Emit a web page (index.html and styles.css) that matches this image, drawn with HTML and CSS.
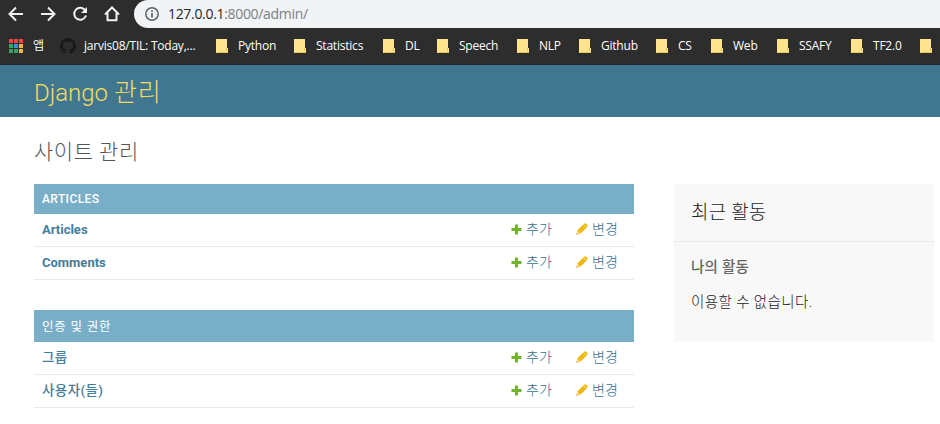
FILE: index.html
```
<!DOCTYPE html>
<html lang="ko">
<head>
<meta charset="utf-8">
<title>사이트 관리 | Django 사이트 관리</title>
<link rel="stylesheet" href="styles.css">
</head>
<body>
<svg class="defs" width="0" height="0" aria-hidden="true">
  <symbol id="folder" viewBox="0 0 12 14"><path fill="#ffe48d" d="M0 0h11v9h1v5H0z"/><path fill="#e7c55c" d="M10 9h1v3h-1zM1 13h11v1H1z"/></symbol>
  <symbol id="plus" viewBox="0 0 11 11"><path fill="#70b52c" d="M4 .5h3V4h3.500v3H7v3.500H4V7H.5V4H4z"/></symbol>
  <symbol id="pencil" viewBox="0 0 12 12"><path fill="#efb80b" d="M.5 11.500l.8-3.900L7.600 1.300l3.100 3.100-6.300 6.300z"/><path fill="#f8d88a" d="M1.300 7.600l3.100 3.100-3.900.8z"/><path fill="#efb80b" d="M8.200.8q1-1 2 0l1 1q1 1 0 2l-.5.6-3.100-3.100z"/><path fill="none" stroke="#fff3c5" stroke-width=".6" d="M7.300 1.700l3 3"/><path fill="#b88a28" d="M.5 11.500l.3-1.500 1.200 1.200z"/></symbol>
</svg>
<div class="toolbar">
  <svg class="nav" width="134" height="28" viewBox="0 0 134 28" fill="none" stroke="#f0f1f2" stroke-width="2">
    <path d="M23 14H10M16 7.500L9.500 14l6.500 6.500"/>
    <path d="M41 14h13M48 7.500l6.500 6.500-6.500 6.500"/>
    <path d="M85.300 10.500A6 6 0 1 0 86 15.500"/><path fill="#f0f1f2" stroke="none" d="M87 7v6h-6z"/>
    <path d="M105 14.500l7-7 7 7M107.500 13v7.200h9V13"/>
  </svg>
  <div class="address">
    <svg width="16" height="16" viewBox="0 0 16 16" fill="none" stroke="#5f6368" stroke-width="1.500"><circle cx="8" cy="8" r="6.200"/><path stroke-width="1.700" d="M8 7v4.500M8 4.300V6"/></svg>
    <span class="url"><b>127.0.0.1</b>:8000/admin/</span>
  </div>
</div>
<div class="bookmarks">
  <span class="mark"><svg class="apps" width="14" height="14" viewBox="0 0 14 14"><path fill="#e24b43" d="M0 0h4v4H0zM5 0h4v4H5zM10 0h4v4h-4z"/><path fill="#35a461" d="M0 5h4v4H0zM0 10h4v4H0z"/><path fill="#4789ea" d="M5 5h4v4H5z"/><path fill="#efb944" d="M10 5h4v4h-4zM10 10h4v4h-4z"/><path fill="#35a461" d="M5 10h4v4H5z"/></svg><span class="app-label">앱</span></span>
  <span class="mark repo"><svg width="16" height="16" viewBox="0 0 16 16"><path fill="#171a1d" d="M8 0C3.580 0 0 3.580 0 8c0 3.540 2.290 6.530 5.470 7.590.4.070.55-.17.55-.38v-1.490c-2.010.37-2.530-.49-2.690-.94-.09-.23-.48-.94-.82-1.130-.28-.15-.68-.52-.01-.53.63-.01 1.080.58 1.230.82.720 1.210 1.870.87 2.330.66.070-.52.280-.87.510-1.070-1.780-.2-3.640-.89-3.640-3.950 0-.87.310-1.590.82-2.150-.08-.2-.36-1.020.08-2.120 0 0 .67-.21 2.200.82a7.600 7.600 0 0 1 4 0c1.530-1.040 2.200-.82 2.200-.82.440 1.100.160 1.920.080 2.120.510.56.82 1.270.82 2.150 0 3.070-1.870 3.750-3.650 3.950.29.25.54.73.54 1.480v2.200c0 .21.150.46.55.38A8 8 0 0 0 16 8c0-4.420-3.580-8-8-8z"/></svg><span>jarvis08/TIL: Today,...</span></span>
  <span class="mark"><svg class="folder"><use href="#folder"/></svg><span>Python</span></span>
  <span class="mark"><svg class="folder"><use href="#folder"/></svg><span>Statistics</span></span>
  <span class="mark"><svg class="folder"><use href="#folder"/></svg><span>DL</span></span>
  <span class="mark"><svg class="folder"><use href="#folder"/></svg><span>Speech</span></span>
  <span class="mark"><svg class="folder"><use href="#folder"/></svg><span>NLP</span></span>
  <span class="mark"><svg class="folder"><use href="#folder"/></svg><span>Github</span></span>
  <span class="mark"><svg class="folder"><use href="#folder"/></svg><span>CS</span></span>
  <span class="mark"><svg class="folder"><use href="#folder"/></svg><span>Web</span></span>
  <span class="mark"><svg class="folder"><use href="#folder"/></svg><span>SSAFY</span></span>
  <span class="mark"><svg class="folder"><use href="#folder"/></svg><span>TF2.0</span></span>
  <span class="mark"><svg class="folder"><use href="#folder"/></svg></span>
</div>
<header class="site-header">Django <span class="site-name">관리</span></header>
<main>
  <h1>사이트 관리</h1>
  <div class="columns">
    <div class="modules">
      <section class="module">
        <h2>ARTICLES</h2>
        <div class="row"><a class="model">Articles</a><a class="add"><svg><use href="#plus"/></svg>추가</a><a class="change"><svg><use href="#pencil"/></svg>변경</a></div>
        <div class="row"><a class="model">Comments</a><a class="add"><svg><use href="#plus"/></svg>추가</a><a class="change"><svg><use href="#pencil"/></svg>변경</a></div>
      </section>
      <section class="module auth">
        <h2>인증 및 권한</h2>
        <div class="row"><a class="model">그룹</a><a class="add"><svg><use href="#plus"/></svg>추가</a><a class="change"><svg><use href="#pencil"/></svg>변경</a></div>
        <div class="row"><a class="model">사용자(들)</a><a class="add"><svg><use href="#plus"/></svg>추가</a><a class="change"><svg><use href="#pencil"/></svg>변경</a></div>
      </section>
    </div>
    <aside>
      <h2>최근 활동</h2>
      <h3>나의 활동</h3>
      <p>이용할 수 없습니다.</p>
    </aside>
  </div>
</main>
</body>
</html>
```
FILE: styles.css
```
* { box-sizing: border-box; }
body { margin: 0; height: 424px; overflow: hidden; background: #fff; color: #333; font-family: Roboto, "Noto Sans CJK KR", sans-serif; }
svg { flex: none; display: block; }
.defs { position: absolute; }
.toolbar { height: 28px; display: flex; background: #2d2d2d; }
.address { flex: 1; height: 28px; background: #f1f3f4; border-radius: 14px 0 0 14px; display: flex; align-items: center; gap: 8px; padding-left: 10px; }
.url { font: 14px/28px "Open Sans", sans-serif; color: #7d8185; letter-spacing: -.32px; white-space: nowrap; }
.url b { font-weight: 400; color: #25282b; }
.bookmarks { height: 37px; background: #2d2d2d; border-bottom: 1px solid #202a30; padding-left: 9px; display: grid; grid-template-columns: 51px 156px 78px 89px 54px 80px 62px 77px 55px 66px 74px 69px 20px; align-items: center; color: #fff; font: 12px/18px "Open Sans", "Noto Sans CJK KR", sans-serif; overflow: hidden; }
.mark { display: flex; align-items: center; gap: 10px; white-space: nowrap; letter-spacing: -.22px; }
.repo { gap: 8px; }
.folder { width: 12px; height: 14px; }
.app-label { font-size: 12px; }
.site-header { height: 52px; background: #417690; color: #f5dd5d; padding: 2px 34px 0; font-size: 24px; line-height: 52px; font-weight: 300; }
.site-name { font-weight: 300; font-size: 25px; letter-spacing: .9px; }
main { padding: 20px 6px 0 34px; }
h1 { margin: 0 0 17px; font-size: 21px; line-height: 30px; font-weight: 300; letter-spacing: .5px; color: #555; }
.columns { display: flex; justify-content: space-between; align-items: flex-start; }
.modules { width: 600px; }
.module { margin-bottom: 30px; }
.module h2 { margin: 0; height: 30px; padding: 0 8px; background: #79aec8; color: #fff; font-size: 12px; line-height: 30px; font-weight: 500; letter-spacing: .4px; }
.auth h2 { height: 32px; line-height: 34px; font-size: 12.5px; font-weight: 400; letter-spacing: .8px; }
.row { height: 33px; border-bottom: 1px solid #eaeaea; padding: 0 16px 0 8px; display: flex; line-height: 31px; font-size: 13px; color: #447e9b; }
.model { flex: 1; font-weight: 700; }
.auth .model { font-weight: 500; font-size: 13.5px; letter-spacing: .4px; line-height: 30px; }
.row .add, .row .change { height: 30px; display: flex; align-items: center; font-weight: 300; font-size: 14px; line-height: 30px; color: #38718f; white-space: nowrap; }
.add { width: 65px; gap: 4px; }
.change { width: 42px; gap: 4px; }
.add svg { width: 11px; height: 11px; }
.change svg { width: 12px; height: 12px; }
aside { width: 260px; height: 158px; background: #f8f8f8; }
aside h2 { margin: 0; height: 58px; padding: 0 17px; border-bottom: 1px solid #eaeaea; font-size: 19px; line-height: 58px; font-weight: 300; letter-spacing: .2px; color: #222; }
aside h3 { margin: 15px 17px 0; font-size: 14.500px; line-height: 22px; font-weight: 500; letter-spacing: .25px; color: #666; }
aside p { margin: 13px 17px 0; font-size: 14.500px; line-height: 22px; font-weight: 300; letter-spacing: .4px; color: #222; }
```
